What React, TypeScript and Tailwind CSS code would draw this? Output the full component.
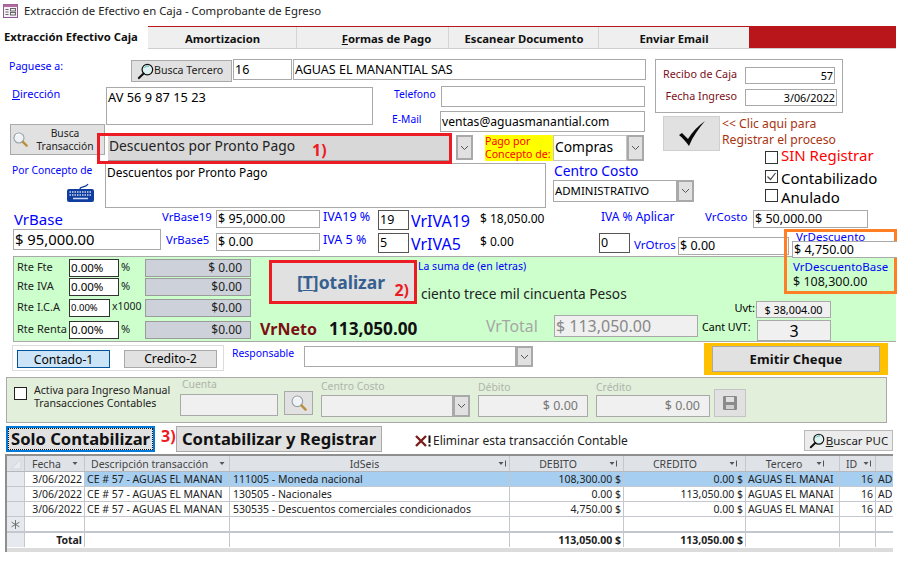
import React from "react";

const B = "font-bold";
const Box = ({ className = "", children }: { className?: string; children?: React.ReactNode }) => (
  <div className={"border border-[#a9a9a9] bg-white shrink-0 overflow-hidden whitespace-nowrap " + className}>{children}</div>
);
const Lbl = ({ className = "", children }: { className?: string; children?: React.ReactNode }) => (
  <div className={"shrink-0 whitespace-nowrap text-[#0000ff] " + className}>{children}</div>
);
const Chevron = () => (
  <svg width="9" height="6" viewBox="0 0 9 6" fill="none" stroke="#555" strokeWidth="1"><path d="M1 1l3.5 3.5L8 1" /></svg>
);
const Drop = ({ className = "" }: { className?: string }) => (
  <div className={"shrink-0 flex items-center justify-center bg-[#e1e1e1] border-2 border-[#a9a9a9] " + className}><Chevron /></div>
);
const Glass = ({ size = 18, tone = "#111" }: { size?: number; tone?: string }) => (
  <svg width={size} height={size} viewBox="0 0 18 18" className="shrink-0">
    <circle cx="11" cy="7" r="5.6" fill="#dff3f3" stroke={tone} strokeWidth="1.3" />
    <path d="M7 11.2L2 16" stroke={tone} strokeWidth="2.2" strokeLinecap="round" />
    <path d="M8 5c1-1.5 3-2 4.5-1.5" stroke="#39a0a0" strokeWidth="1" fill="none" />
  </svg>
);
const GlassGray = ({ size = 22 }: { size?: number }) => (
  <svg width={size} height={size} viewBox="0 0 22 22" className="shrink-0">
    <circle cx="9" cy="9" r="6.5" fill="#eef3f7" stroke="#9aa0a6" strokeWidth="1.4" />
    <path d="M5 6c1-1.5 3-2 5-1.5" stroke="#fff" strokeWidth="1.5" fill="none" />
    <path d="M14 14l5 5" stroke="#b8913f" strokeWidth="3" strokeLinecap="round" />
  </svg>
);
const Check = ({ on = false, className = "" }: { on?: boolean; className?: string }) => (
  <div className={"shrink-0 w-[13px] h-[13px] border border-[#333] bg-white flex items-center justify-center " + className}>
    {on && (
      <svg width="11" height="11" viewBox="0 0 11 11" fill="none" stroke="#444" strokeWidth="1.2"><path d="M1.5 5.5l3 3 5-6.5" /></svg>
    )}
  </div>
);
const SortArrow = ({ bar = false }: { bar?: boolean }) => (
  <svg width="9" height="7" viewBox="0 0 9 7" className="shrink-0"><path d="M0.5 2h5L3 5z" fill="#555" />{bar && <path d="M7.5 0.5v6" stroke="#555" strokeWidth="1" />}</svg>
);

const GRID = "grid grid-cols-[18px_60px_145px_280px_114px_122px_94px_36px_18px]";
const Cell = ({ className = "", children }: { className?: string; children?: React.ReactNode }) => (
  <div className={"border-r border-[#c4c8ce] px-[2px] overflow-hidden whitespace-nowrap leading-[14px] " + className}>{children}</div>
);
const rows = [
  ["111005 - Moneda nacional", "108,300.00 $", "0.00 $", true],
  ["130505 - Nacionales", "0.00 $", "113,050.00 $", false],
  ["530535 - Descuentos comerciales condicionados", "4,750.00 $", "0.00 $", false],
] as const;

const Rte = ({ label, value, unit, amount, className = "", small = false }: { label: string; value: string; unit: string; amount: string; className?: string; small?: boolean }) => (
  <div className={"flex items-start h-[18px] " + className}>
    <div className="w-[55px] pl-[3px] shrink-0 text-[11px] leading-[15px] text-[#222] whitespace-nowrap">{label}</div>
    <Box className={(small ? "w-[41px] text-[9.5px] " : "w-[50px] text-[11.5px] ") + "h-[18px] !border-[#333] leading-[16px] pl-[1px]"}>{value}</Box>
    <div className={(small ? "w-[35px] pl-[2px] text-[10.5px] " : "w-[26px] pl-[2px] text-[11px] ") + "shrink-0 leading-[15px] text-[#222]"}>{unit}</div>
    <div className="w-[106px] h-[18px] shrink-0 bg-[#cdd2da] border border-[#9b9b9b] text-right pr-[8px] text-[12px] leading-[16px] text-[#222]">{amount}</div>
  </div>
);

export default function App() {
  return (
    <div className="relative w-[901px] h-[565px] overflow-hidden bg-white text-black text-[12px] [font-family:'Noto_Sans',sans-serif]">
      {/* title */}
      <div className="h-[26px] flex items-center pl-[3px] gap-[6px]">
        <svg width="15" height="14" viewBox="0 0 15 14" className="shrink-0 -mt-[4px]">
          <rect x="0.5" y="0.5" width="14" height="13" fill="#f4f0f6" stroke="#8c5a92" />
          <rect x="0.5" y="0.5" width="14" height="2.5" fill="#b36a9f" />
          <path d="M2.5 5.5h3M2.5 8h3M2.5 10.5h3" stroke="#666" />
          <rect x="7.5" y="4.5" width="5" height="2.5" fill="none" stroke="#666" />
          <rect x="7.5" y="8.5" width="5" height="2.5" fill="none" stroke="#666" />
        </svg>
        <div className="text-[11.35px] -mt-[4px] whitespace-nowrap text-[#222]">Extracción de Efectivo en Caja - Comprobante de Egreso</div>
      </div>
      {/* tabs */}
      <div className="h-[23px] flex">
        <div className={"w-[148px] pl-[4px] pt-[3px] text-[11.3px] whitespace-nowrap text-[#111] " + B}>Extracción Efectivo Caja</div>
        <div className={"w-[748px] flex border-t border-[#b8161b] border-b border-b-[#cfcfcf] text-[11.3px] text-[#111] " + B}>
          <div className="w-[149px] bg-[#efefef] border-r border-[#d4d4d4] flex items-center justify-center pt-[3px] pl-[1px]">Amortizacion</div>
          <div className="w-[152px] bg-[#efefef] border-r border-[#d4d4d4] flex items-center justify-center pt-[3px] pl-[28px]"><span><u>F</u>ormas de Pago</span></div>
          <div className="w-[150px] bg-[#efefef] border-r border-[#d4d4d4] flex items-center justify-center pt-[3px] pl-[1px]">Escanear Documento</div>
          <div className="w-[150px] bg-[#efefef] flex items-center justify-center pt-[3px]">Enviar Email</div>
          <div className="flex-1 bg-[#b8161b]" />
        </div>
      </div>

      {/* top section */}
      <div className="h-[161px] flex">
        <div className="w-[650px] shrink-0">
          <div className="mt-[10px] h-[27px] flex items-start">
            <Lbl className="w-[131px] pl-[9px] text-[10.6px] leading-[14px]">Paguese a:</Lbl>
            <div className="w-[101px] h-[22px] mt-[1px] shrink-0 bg-[#e1e1e1] border border-[#a9a9a9] flex items-center pl-[5px] gap-0 text-[10.6px] text-[#222]">
              <Glass size={17} />Busca Tercero
            </div>
            <Box className="ml-[1px] w-[59px] h-[21px] text-[12.5px] leading-[19px] pl-[1px]">16</Box>
            <Box className="ml-[1px] w-[353px] h-[21px] text-[12.5px] leading-[19px] pl-[1px]">AGUAS EL MANANTIAL SAS</Box>
          </div>
          <div className="h-[49px] flex items-start">
            <Lbl className="w-[106px] pl-[12px] pt-[1px] text-[11px] leading-[14px]"><u>D</u>irección</Lbl>
            <Box className="w-[267px] h-[38px] mt-[1px] text-[12.8px] leading-[18px] pl-[1px]">AV 56 9 87 15 23</Box>
            <div className="ml-[19px] shrink-0">
              <div className="flex h-[25px]">
                <Lbl className="w-[49px] pl-[2px] pt-[1px] text-[10.3px] leading-[14px]">Telefono</Lbl>
                <Box className="w-[204px] h-[21px]" />
              </div>
              <div className="flex">
                <Lbl className="w-[49px] text-[10.3px] leading-[14px] pt-[1px]">E-Mail</Lbl>
                <Box className="w-[205px] h-[21px] text-[12.1px] leading-[19px] pl-[1px] -ml-[1px]">ventas@aguasmanantial.com</Box>
              </div>
            </div>
          </div>
          <div className="h-[28px] flex items-start">
            <div className="ml-[10px] w-[95px] h-[31px] -mt-[11px] shrink-0 bg-[#e1e1e1] border border-[#a9a9a9] flex items-center pl-[1px] pr-[3px] text-[10.3px] leading-[13px] text-center text-[#222]">
              <GlassGray size={17} />
              <div className="flex-1">Busca<br />Transacción</div>
            </div>
            <div className="ml-[3px] w-[342px] h-[26px] shrink-0 bg-[#d8d8d8] border-b border-[#9a9a9a] text-[13.8px] leading-[22px] pl-[1px] text-[#222] whitespace-nowrap">
              Descuentos por Pronto Pago
            </div>
            <Drop className="ml-[6px] w-[17px] h-[25px]" />
            <div className="ml-[12px] w-[68px] h-[26px] shrink-0 bg-[#ffff00] text-[#ff0000] text-[10.6px] leading-[13px] whitespace-nowrap">Pago por<br />Concepto de:</div>
            <Box className="w-[74px] h-[26px] text-[13.8px] leading-[21px] pl-[1px] !border-[#c4c4c4]">Compras</Box>
            <Drop className="w-[17px] h-[26px]" />
          </div>
          <div className="flex items-start">
            <div className="w-[105px] shrink-0">
              <Lbl className="pl-[12px] text-[10.3px] leading-[14px] h-[20px]">Por Concepto de</Lbl>
              <svg width="29" height="20" viewBox="0 0 29 20" className="ml-[66px]">
                <path d="M14 6c0-3 6-1 8-5" stroke="#123f9c" strokeWidth="1.2" fill="none" />
                <rect x="1" y="6" width="27" height="13" rx="2" fill="#0f3ea0" />
                <path d="M3.5 9h22M3.5 12h22" stroke="#cfd9f0" strokeWidth="1.5" strokeDasharray="1.5 1" />
                <path d="M7 15.5h15" stroke="#cfd9f0" strokeWidth="1.5" />
              </svg>
            </div>
            <Box className="w-[441px] h-[45px] text-[11.9px] leading-[16px] pl-[1px]">Descuentos por Pronto Pago</Box>
            <div className="ml-[7px] shrink-0">
              <Lbl className="text-[13.8px] leading-[18px] -mt-[1px] pl-[1px]">Centro Costo</Lbl>
              <div className="flex">
                <Box className="w-[124px] h-[22px] text-[11.4px] leading-[19px] pl-[1px]">ADMINISTRATIVO</Box>
                <Drop className="w-[17px] h-[22px]" />
              </div>
            </div>
          </div>
        </div>
        <div className="flex-1">
          <div className="ml-[5px] mt-[10px] w-[188px] h-[54px] border border-[#a9a9a9] pt-[7px] text-[10.8px] leading-[14px] text-[#7a1020]">
            <div className="flex h-[22px]">
              <div className="w-[81px] text-right shrink-0">Recibo de Caja</div>
              <Box className="ml-[8px] w-[90px] h-[17px] text-right text-black text-[10.8px] leading-[15px] pr-[1px]">57</Box>
            </div>
            <div className="flex">
              <div className="w-[81px] text-right shrink-0">Fecha Ingreso</div>
              <Box className="ml-[8px] w-[92px] h-[17px] text-right text-black text-[10.8px] leading-[15px] pr-[1px]">3/06/2022</Box>
            </div>
          </div>
          <div className="flex mt-[3px] ml-[13px]">
            <div className="w-[57px] h-[35px] shrink-0 bg-[#e1e1e1] border border-[#cfcfcf] flex items-center justify-center">
              <svg width="28" height="30" viewBox="0 0 28 30" fill="#0a0a0a"><path d="M1 16l3-2 6 6C14 13 20 7 27 2c-6 7-12 15-16 25-3-4-6-8-10-11z" /></svg>
            </div>
            <div className="ml-[2px] text-[12.2px] leading-[16px] text-[#a8330f] whitespace-nowrap">&lt;&lt; Clic aqui para<br />Registrar el proceso</div>
          </div>
          <div className="ml-[115px] -mt-[6px] text-[15px] leading-[18px] whitespace-nowrap">
            <div className="flex items-center h-[19px] gap-[3px] text-[#ff0000]"><Check className="mt-[6px]" />SIN Registrar</div>
            <div className="flex items-center h-[19px] gap-[3px] mt-[4px]"><Check on className="-mt-[3px]" />Contabilizado</div>
            <div className="flex items-center h-[19px] gap-[3px]"><Check className="-mt-[3px]" />Anulado</div>
          </div>
        </div>
      </div>

      {/* amounts */}
      <div className="h-[46px] flex">
        <div className="w-[162px] shrink-0 pl-[13px]">
          <Lbl className="text-[15px] leading-[19px] pl-[1px]">VrBase</Lbl>
          <Box className="w-[148px] h-[21px] text-[14.8px] leading-[19px] pl-[1px]">$ 95,000.00</Box>
        </div>
        <div className="flex-1">
          <div className="h-[23px] flex items-start">
            <Lbl className="w-[54px] text-[11.3px] leading-[14px]">VrBase19</Lbl>
            <Box className="w-[104px] h-[18px] text-[12.5px] leading-[16px] pl-[1px]">$ 95,000.00</Box>
            <Lbl className="ml-[3px] w-[55px] text-[12.5px] leading-[14px]">IVA19 %</Lbl>
            <Box className="w-[31px] h-[20px] !border-[#555] text-[12.5px] leading-[18px] pl-[1px]">19</Box>
            <Lbl className="ml-[2px] w-[69px] text-[16px] leading-[23px]">VrIVA19</Lbl>
            <div className="w-[121px] shrink-0 text-[12px]">$ 18,050.00</div>
            <Lbl className="w-[104px] text-[12px] leading-[14px]">IVA % Aplicar</Lbl>
            <Lbl className="w-[48px] text-[11.5px] leading-[14px]">VrCosto</Lbl>
            <Box className="w-[115px] h-[18px] text-[12.5px] leading-[16px] pl-[1px]">$ 50,000.00</Box>
          </div>
          <div className="h-[23px] flex items-start">
            <Lbl className="w-[54px] pl-[4px] text-[11.3px] leading-[14px]">VrBase5</Lbl>
            <Box className="w-[104px] h-[18px] text-[12.5px] leading-[16px] pl-[1px]">$ 0.00</Box>
            <Lbl className="ml-[3px] w-[55px] text-[12.5px] leading-[14px]">IVA 5 %</Lbl>
            <Box className="w-[31px] h-[20px] !border-[#555] text-[12.5px] leading-[18px] pl-[1px]">5</Box>
            <Lbl className="ml-[2px] w-[69px] text-[16px] leading-[23px]">VrIVA5</Lbl>
            <div className="w-[119px] shrink-0 text-[12px]">$ 0.00</div>
            <Box className="w-[31px] h-[20px] !border-[#555] text-[12.5px] leading-[18px] pl-[1px]">0</Box>
            <Lbl className="ml-[4px] w-[44px] text-[11.5px] leading-[14px] pt-[5px]">VrOtros</Lbl>
            <Box className="mt-[4px] w-[111px] h-[18px] text-[12.5px] leading-[16px] pl-[1px]">$ 0.00</Box>
          </div>
        </div>
      </div>

      {/* green panel */}
      <div className="ml-[13px] w-[883px] h-[86px] bg-[#ccffcc] border-t border-l border-[#a9a9a9] border-b flex">
        <div className="w-[240px] shrink-0 pt-[2px]">
          <Rte label="Rte Fte" value="0.00%" unit="%" amount="$ 0.00" />
          <Rte label="Rte IVA" value="0.00%" unit="%" amount="$0.00" className="mt-[1px]" />
          <Rte label="Rte I.C.A" value="0.00%" unit="x1000" amount="$0.00" small className="mt-[3px]" />
          <Rte label="Rte Renta" value="0.00%" unit="%" amount="$0.00" className="mt-[4px]" />
        </div>
        <div className="flex-1">
          <div className="h-[44px] flex">
            <div className={"ml-[15px] mt-[3px] w-[148px] h-[44px] shrink-0 bg-[#e1e1e1] border-[3px] border-[#ed1c24] relative flex items-center justify-center pr-[4px] text-[17.5px] text-[#36608f] " + B}>
              <span>[<u>T</u>]otalizar</span>
              <span className="absolute right-[5px] bottom-[-1px] text-[#ed1c24] text-[16px] font-bold [font-family:'Liberation_Sans',sans-serif]">2)</span>
            </div>
            <div className="w-[366px] shrink-0 pl-[1px]">
              <Lbl className="text-[10.5px] leading-[14px] mt-[2px]">La suma de (en letras)</Lbl>
              <div className="text-[13.7px] leading-[18px] ml-[3px] mt-[12px] whitespace-nowrap text-[#222]">ciento trece mil cincuenta Pesos</div>
            </div>
          </div>
          <div className="flex items-start">
            <div className={"ml-[6px] mt-[16px] w-[69px] shrink-0 text-[16px] text-[#7b0f12] whitespace-nowrap " + B}>VrNeto</div>
            <div className={"mt-[15px] w-[157px] shrink-0 text-[17.2px] text-[#111] whitespace-nowrap " + B}>113,050.00</div>
            <div className="mt-[14px] w-[68px] shrink-0 text-[15.8px] text-[#a6a6a6]">VrTotal</div>
            <Box className="mt-[14px] w-[144px] h-[22px] !bg-[#f0f0f0] text-[16px] leading-[20px] pl-[1px] text-[#888]">$ 113,050.00</Box>
            <div className="ml-[4px] shrink-0">
              <div className="flex h-[19px]">
                <div className="w-[54px] text-right pr-[1px] text-[11px] leading-[14px]">Uvt:</div>
                <div className="w-[75px] h-[17px] bg-[#f0f0f0] border border-[#a9a9a9] text-center text-[10.8px] leading-[15px]">$ 38,004.00</div>
              </div>
              <div className="flex">
                <div className="w-[55px] text-[10.6px] leading-[14px] whitespace-nowrap">Cant UVT:</div>
                <div className="w-[74px] h-[21px] bg-[#f0f0f0] border border-[#a9a9a9] text-center text-[16px] leading-[21px]">3</div>
              </div>
            </div>
          </div>
        </div>
      </div>

      {/* contado row */}
      <div className="h-[35px] flex items-start">
        <div className="ml-[12px] mt-[3px] w-[212px] h-[26px] shrink-0 border border-[#dcdcdc] flex items-start pl-[4px] pt-[4px] text-[12.2px]">
          <div className="w-[93px] h-[18px] bg-[#cce4f7] border border-[#005499] text-center leading-[18px]">Contado-1</div>
          <div className="ml-[14px] w-[93px] h-[18px] bg-[#e1e1e1] border border-[#a9a9a9] text-center leading-[16px]">Credito-2</div>
        </div>
        <Lbl className="ml-[8px] w-[72px] mt-[4px] text-[10.4px] leading-[14px]">Responsable</Lbl>
        <Box className="mt-[4px] w-[212px] h-[21px]" />
        <Drop className="mt-[4px] w-[17px] h-[21px]" />
        <div className="ml-[171px] mt-[1px] w-[184px] h-[32px] shrink-0 bg-[#ffc000] pt-[3px] pl-[8px]">
          <div className="w-[168px] h-[26px] bg-[#e1e1e1] border border-[#a9a9a9] text-center font-bold text-[13px] leading-[24px] [font-family:'Liberation_Sans',sans-serif] tracking-[0.1px] text-[#111]">Emitir Cheque</div>
        </div>
      </div>

      {/* manual entry */}
      <div className="ml-[6px] w-[881px] h-[46px] bg-[#e2efda] border border-[#a9a9a9] flex items-start">
        <Check className="ml-[7px] mt-[9px] !border-[#222]" />
        <div className="ml-[7px] mt-[6px] w-[146px] shrink-0 text-[10.6px] leading-[13px] text-[#222] whitespace-nowrap">Activa para Ingreso Manual<br />Transacciones Contables</div>
        <div className="shrink-0 w-[104px]">
          <div className="text-[10.4px] leading-[14px] text-[#aeb4aa] ml-[2px] -mt-[1px]">Cuenta</div>
          <Box className="w-[98px] h-[22px] mt-[3px] !bg-[#f0f0f0]" />
        </div>
        <div className="w-[29px] h-[24px] mt-[13px] shrink-0 bg-[#e1e1e1] border border-[#a9a9a9] flex items-center justify-center"><GlassGray size={18} /></div>
        <div className="ml-[8px] shrink-0 w-[157px]">
          <div className="text-[10.4px] leading-[14px] text-[#aeb4aa] mt-[1px]">Centro Costo</div>
          <div className="flex mt-[2px]">
            <Box className="w-[132px] h-[22px] !bg-[#f0f0f0]" />
            <Drop className="w-[17px] h-[22px]" />
          </div>
        </div>
        <div className="shrink-0 w-[118px]">
          <div className="text-[10.4px] leading-[14px] text-[#aeb4aa] mt-[2px]">Débito</div>
          <Box className="w-[110px] h-[22px] mt-[1px] !bg-[#f0f0f0] text-right pr-[9px] text-[12.5px] leading-[20px] text-[#777]">$ 0.00</Box>
        </div>
        <div className="shrink-0 w-[118px]">
          <div className="text-[10.4px] leading-[14px] text-[#aeb4aa] mt-[2px]">Crédito</div>
          <Box className="w-[114px] h-[22px] mt-[1px] !bg-[#f0f0f0] text-right pr-[9px] text-[12.5px] leading-[20px] text-[#777]">$ 0.00</Box>
        </div>
        <div className="w-[32px] h-[28px] mt-[11px] shrink-0 bg-[#e1e1e1] border border-[#c4c4c4] flex items-center justify-center">
          <svg width="14" height="14" viewBox="0 0 14 14"><rect width="14" height="14" rx="1" fill="#8b8b8b" /><rect x="3" y="1" width="8" height="5" fill="#e1e1e1" /><rect x="3" y="9" width="8" height="4" fill="#d0d0d0" /></svg>
        </div>
      </div>

      {/* actions */}
      <div className="h-[31px] flex items-start">
        <div className={"ml-[6px] mt-[3px] w-[149px] h-[26px] shrink-0 bg-[#e1e1e1] border-2 border-[#0078d7] flex items-center justify-center text-[16.6px] whitespace-nowrap text-[#111] outline-1 -outline-offset-3 outline-dotted outline-[#111] " + B}>Solo Contabilizar</div>
        <div className="ml-[6px] w-[15px] mt-[1px] shrink-0 text-[#ed1c24] font-bold text-[16px] [font-family:'Liberation_Sans',sans-serif]">3)</div>
        <div className={"mt-[3px] w-[206px] h-[26px] shrink-0 bg-[#e1e1e1] border border-[#a9a9a9] flex items-center justify-center text-[16.6px] whitespace-nowrap text-[#111] " + B}>Contabilizar y Registrar</div>
        <div className="ml-[33px] mt-[9px] flex items-center shrink-0 w-[389px] text-[12px] text-[#222] whitespace-nowrap">
          <svg width="18" height="12" viewBox="0 0 18 12" className="shrink-0">
            <path d="M1 1l10 10M11 1L1 11" stroke="#7b1d1d" strokeWidth="2.4" />
            <path d="M14.5 0.5v7.5M14.5 9.5v2" stroke="#111" strokeWidth="2" />
          </svg>
          Eliminar esta transacción Contable
        </div>
        <div className="mt-[7px] w-[89px] h-[21px] shrink-0 bg-[#ececec] border border-[#b9b9b9] flex items-center justify-center gap-[1px] text-[11.5px] text-[#222]">
          <Glass size={16} /><span><u>B</u>uscar PUC</span>
        </div>
      </div>

      {/* datasheet */}
      <div className="ml-[5px] w-[888px] h-[98px] border-t-2 border-l-2 border-[#8f8f8f] text-[10.5px] text-[#222] [font-family:'Liberation_Sans',sans-serif] overflow-hidden">
        <div className={GRID + " h-[16px] bg-[#dfe3e8] border-b border-[#b5b9be] text-[#444]"}>
          <Cell className="!px-0 flex items-center justify-center">
            <svg width="12" height="12" viewBox="0 0 12 12"><path d="M11 1v10H1z" fill="#e8ebef" stroke="#cdd1d6" strokeWidth="0.7" /></svg>
          </Cell>
          <Cell className="flex items-center gap-[11px] pl-[7px]">Fecha<SortArrow /></Cell>
          <Cell className="flex items-center gap-[11px] pl-[6px]">Descripción transacción<SortArrow /></Cell>
          <Cell className="flex items-center justify-center pr-[12px] relative">IdSeis<span className="absolute right-[2px]"><SortArrow bar /></span></Cell>
          <Cell className="flex items-center justify-center gap-[32px] pl-[26px]">DEBITO<SortArrow bar /></Cell>
          <Cell className="flex items-center justify-center gap-[32px] pl-[24px]">CREDITO<SortArrow bar /></Cell>
          <Cell className="flex items-center justify-center gap-[14px] pl-[8px]">Tercero<SortArrow bar /></Cell>
          <Cell className="flex items-center gap-[6px] pl-[6px]">ID<SortArrow bar /></Cell>
          <Cell />
        </div>
        {rows.map(([id, d, c, sel]) => (
          <div key={id} className={GRID + " h-[15px] border-b border-[#c4c8ce]"}>
            <Cell className="bg-[#e6e9ed]" />
            <Cell className="text-right bg-white">3/06/2022</Cell>
            <Cell className={sel ? "bg-[#a6cef0]" : "bg-white"}>CE # 57 - AGUAS EL MANAN</Cell>
            <Cell className={(sel ? "bg-[#a6cef0] " : "bg-white ") + "pl-[3px]"}>{id}</Cell>
            <Cell className={(sel ? "bg-[#a6cef0] " : "bg-white ") + "text-right"}>{d}</Cell>
            <Cell className={(sel ? "bg-[#a6cef0] " : "bg-white ") + "text-right"}>{c}</Cell>
            <Cell className={sel ? "bg-[#a6cef0]" : "bg-white"}>AGUAS EL MANAI</Cell>
            <Cell className={(sel ? "bg-[#a6cef0] " : "bg-white ") + "text-right"}>16</Cell>
            <Cell className={sel ? "bg-[#a6cef0]" : "bg-white"}>AD</Cell>
          </div>
        ))}
        <div className={GRID + " h-[16px] border-b-2 border-[#c4c8ce]"}>
          <Cell className="bg-[#e6e9ed] flex items-center justify-center !px-0">
            <svg width="9" height="9" viewBox="0 0 9 9" stroke="#666" strokeWidth="0.9"><path d="M4.5 0v9M0.6 2.2l7.8 4.6M8.4 2.2L0.6 6.8" /></svg>
          </Cell>
          <Cell /><Cell /><Cell /><Cell /><Cell /><Cell /><Cell /><Cell />
        </div>
        <div className={GRID + " h-[14px] font-bold"}>
          <Cell className="bg-[#e6e9ed]" />
          <Cell className="text-right">Total</Cell>
          <Cell /><Cell />
          <Cell className="text-right">113,050.00 $</Cell>
          <Cell className="text-right">113,050.00 $</Cell>
          <Cell /><Cell /><Cell />
        </div>
        <div className="h-[5px] bg-[#dcdcdc] mt-[1px]" />
      </div>

      {/* annotation overlays */}
      <div className="absolute left-[97px] top-[133px] w-[355px] h-[31px] border-[3px] border-[#ed1c24] pointer-events-none">
        <div className="ml-[212px] mt-[2px] text-[16px] leading-[24px] font-bold text-[#ed1c24] [font-family:'Liberation_Sans',sans-serif]">1)</div>
      </div>
      <div className="absolute left-[784px] top-[229px] w-[113px] h-[65px] border-[3px] border-[#ff7f27]">
        <Lbl className="ml-[9px] text-[11.5px] leading-[9px]">VrDescuento</Lbl>
        <Box className="ml-[5px] w-[105px] h-[17px] text-[12.5px] leading-[15px] pl-[1px] !border-r-0">$ 4,750.00</Box>
        <Lbl className="ml-[6px] text-[11.5px] leading-[14px] mt-[2px]">VrDescuentoBase</Lbl>
        <div className="ml-[6px] text-[12.5px] leading-[16px] text-[#111]">$ 108,300.00</div>
      </div>
    </div>
  );
}
